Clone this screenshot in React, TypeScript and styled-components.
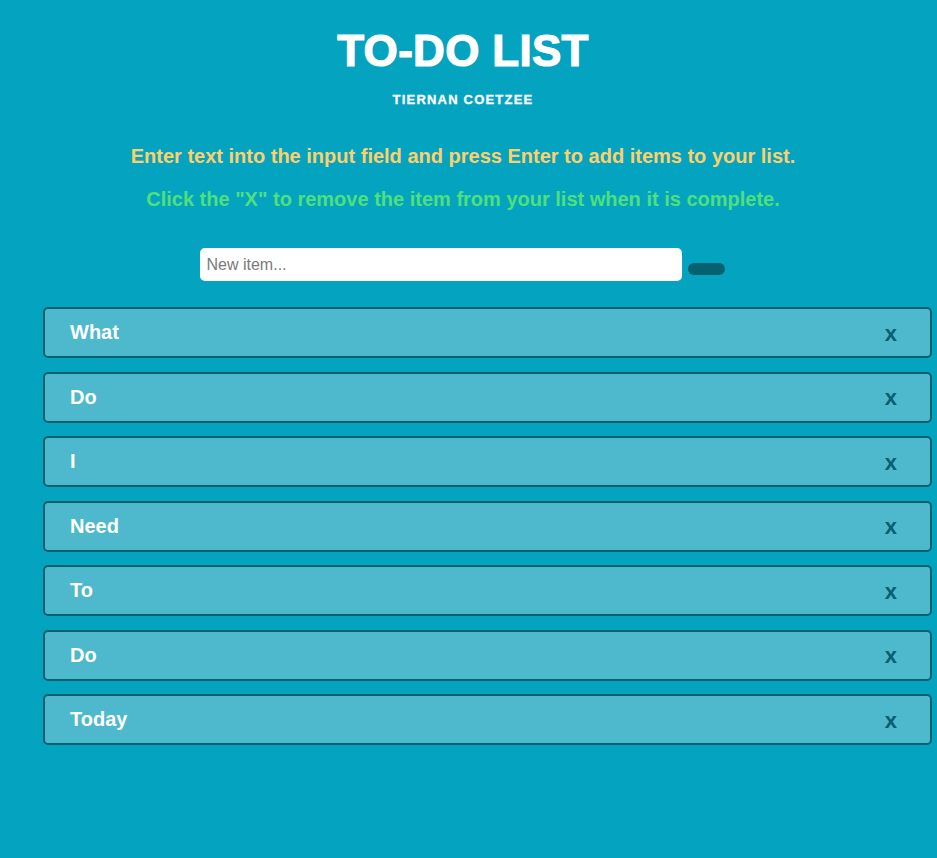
import styled, { createGlobalStyle } from "styled-components";

const GlobalStyle = createGlobalStyle`
  html, body {
    margin: 0;
    padding: 0;
    background: #04a3c0;
    min-height: 100%;
  }
  body {
    font-family: "Liberation Sans", Arial, sans-serif;
  }
`;

const Page = styled.main`
  min-height: 858px;
  background: #04a3c0;
  padding-top: 28px;
  box-sizing: border-box;
`;

const Header = styled.header`
  padding-right: 11px;
`;

const Title = styled.h1`
  margin: 0;
  text-align: center;
  color: #ffffff;
  font-size: 44px;
  font-weight: 900;
  line-height: 46px;
  letter-spacing: 0.3px;
  -webkit-text-stroke: 1.2px #ffffff;
`;

const Author = styled.h3`
  margin: 18px 0 0;
  text-align: center;
  color: #ffffff;
  font-size: 13px;
  font-weight: bold;
  letter-spacing: 1.2px;
  line-height: 15px;
  -webkit-text-stroke: 0.3px #ffffff;
`;

const Hint = styled.p<{ $tone: string }>`
  margin: ${p => (p.$tone === "yellow" ? "38px" : "21px")} 0 0;
  text-align: center;
  color: ${p => (p.$tone === "yellow" ? "#fdd06c" : "#4ee07c")};
  font-size: 20px;
  font-weight: bold;
  line-height: 22px;
`;

const Form = styled.form`
  display: flex;
  justify-content: center;
  align-items: flex-end;
  gap: 6px;
  margin-top: 38px;
  padding-right: 13px;
`;

const Input = styled.input`
  width: 482px;
  height: 33px;
  box-sizing: border-box;
  border: none;
  border-radius: 5px;
  padding: 0 7px;
  font-family: "Liberation Sans", Arial, sans-serif;
  font-size: 16px;
  background: #ffffff;
  outline: none;
  &::placeholder {
    color: #7a7a7a;
  }
`;

const AddButton = styled.button`
  width: 37px;
  height: 12px;
  margin-bottom: 6px;
  border: none;
  border-radius: 6px;
  background: #05606f;
  padding: 0;
`;

const List = styled.ul`
  list-style: none;
  margin: 26px 5px 0 43px;
  padding: 0;
  display: flex;
  flex-direction: column;
  gap: 13.5px;
`;

const Item = styled.li`
  height: 51px;
  box-sizing: border-box;
  display: flex;
  align-items: center;
  justify-content: space-between;
  padding: 0 33px 0 25px;
  background: #4eb8cc;
  border: 2px solid #07606f;
  border-radius: 5px;
  color: #ffffff;
  font-size: 20px;
  font-weight: bold;
`;

const Remove = styled.span`
  color: #07606f;
  font-size: 22px;
  font-weight: bold;
  cursor: pointer;
  padding-top: 2px;
`;

const items = ["What", "Do", "I", "Need", "To", "Do", "Today"];

export default function App() {
  return (
    <>
      <GlobalStyle />
      <Page>
        <Header>
          <Title>TO-DO LIST</Title>
          <Author>TIERNAN COETZEE</Author>
          <Hint $tone="yellow">Enter text into the input field and press Enter to add items to your list.</Hint>
          <Hint $tone="green">Click the "X" to remove the item from your list when it is complete.</Hint>
        </Header>
        <Form onSubmit={e => e.preventDefault()}>
          <Input placeholder="New item..." />
          <AddButton type="submit" />
        </Form>
        <List>
          {items.map((t, i) => (
            <Item key={i}>
              <span>{t}</span>
              <Remove>x</Remove>
            </Item>
          ))}
        </List>
      </Page>
    </>
  );
}
